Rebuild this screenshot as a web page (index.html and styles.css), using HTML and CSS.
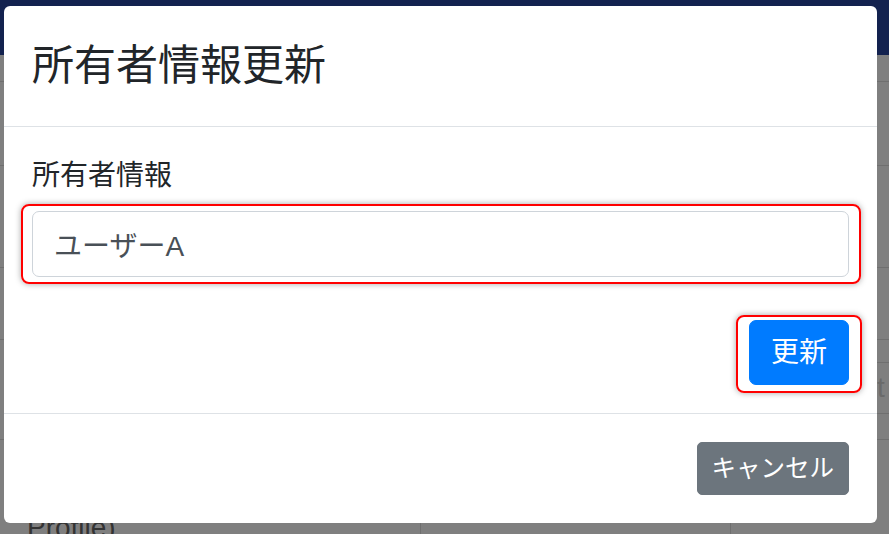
FILE: index.html
```html
<!DOCTYPE html>
<html lang="ja">
<head>
<meta charset="UTF-8">
<title>所有者情報更新</title>
<link rel="stylesheet" href="styles.css">
</head>
<body>

<div class="page">
  <div class="navbar"></div>
  <div class="bg-row h27"><div></div><div></div><div></div></div>
  <div class="bg-row h84"><div></div><div></div><div></div></div>
  <div class="bg-row h102"><div></div><div></div><div></div></div>
  <div class="bg-row h72"><div></div><div></div><div></div></div>
  <div class="bg-row h100">
    <div></div><div></div>
    <div class="sub">
      <div class="sub-a"></div>
      <div class="sub-b"><span class="ghost">t</span></div>
    </div>
  </div>
  <div class="bg-row last">
    <div class="cell-text">Profile)</div><div></div><div></div>
  </div>
</div>

<div class="modal">
  <div class="modal-header">
    <h4 class="modal-title">所有者情報更新</h4>
  </div>
  <div class="modal-body">
    <div class="form-group">
      <label class="label">所有者情報</label>
      <div class="mark mark-input">
        <input class="form-control" type="text" value="ユーザーA">
      </div>
    </div>
    <div class="actions">
      <div class="mark mark-btn">
        <button class="btn btn-primary">更新</button>
      </div>
    </div>
  </div>
  <div class="modal-footer">
    <button class="btn btn-sm btn-secondary">キャンセル</button>
  </div>
</div>

</body>
</html>
```

FILE: styles.css
```css
html, body { margin: 0; height: 100%; overflow: hidden; }
body {
  font-family: "Liberation Sans", "Noto Sans CJK JP", sans-serif;
  background-color: #7f7f7f;
  color: #212529;
}

/* dimmed page behind the dialog */
.page { width: 889px; }
.navbar { height: 55px; background-color: #13224f; }
.bg-row {
  display: grid;
  grid-template-columns: 420px 310px 1fr;
  border-bottom: 1px solid #6f6f6f;
  box-sizing: border-box;
}
.bg-row > div + div { border-left: 1px solid #6f6f6f; }
.h27 { height: 27px; }
.h84 { height: 84px; }
.h102 { height: 102px; }
.h72 { height: 72px; }
.h100 { height: 100px; }
.last { height: 100px; border-bottom: none; }
.sub-a { height: 22px; border-bottom: 1px solid #6f6f6f; }
.sub-b { height: 50px; border-bottom: 1px solid #6f6f6f; padding-left: 146px; }
.ghost { font-size: 28px; line-height: 50px; color: #6a6a6a; }
.cell-text {
  padding: 68px 0 0 27px;
  font-size: 28px;
  line-height: 40px;
  color: #333333;
  white-space: nowrap;
}

/* dialog */
.modal {
  position: absolute;
  left: 4px;
  top: 6px;
  width: 873px;
  background-color: #fff;
  border-radius: 6px;
  box-sizing: border-box;
}
.modal-header {
  padding: 28px;
  border-bottom: 1px solid #dee2e6;
}
.modal-title {
  margin: 0;
  font-size: 42px;
  line-height: 64px;
  font-weight: 400;
  color: #212529;
}
.modal-body { padding: 28px; }
.form-group { margin-bottom: 43px; }
.label {
  display: block;
  margin-bottom: 14px;
  font-size: 28px;
  line-height: 42px;
}
.form-control {
  display: block;
  width: 100%;
  height: 66px;
  box-sizing: border-box;
  padding: 0 21px;
  font-family: inherit;
  font-size: 28px;
  color: #495057;
  border: 1px solid #ced4da;
  border-radius: 7px;
  background: #fff;
}

/* red annotation boxes */
.mark { position: relative; }
.mark::after {
  content: "";
  position: absolute;
  border: 2px solid #ff0000;
  border-radius: 8px;
  box-shadow: 0 0 6px rgba(0, 0, 0, 0.35);
  pointer-events: none;
}
.mark-input::after { left: -11px; right: -12px; top: -7px; bottom: -7px; }
.mark-btn::after { left: -13px; right: -13px; top: -5px; bottom: -8px; }
.mark-input .form-control { position: relative; z-index: 1; }

.actions { display: flex; justify-content: flex-end; }
.btn {
  display: block;
  font-family: inherit;
  color: #fff;
  border: 1px solid transparent;
  box-sizing: border-box;
}
.btn-primary {
  position: relative;
  z-index: 1;
  height: 65px;
  padding: 0 21px;
  font-size: 28px;
  line-height: 42px;
  background-color: #007bff;
  border-color: #007bff;
  border-radius: 7px;
}
.modal-footer {
  display: flex;
  justify-content: flex-end;
  padding: 21px;
  border-top: 1px solid #dee2e6;
}
.btn-sm {
  margin: 7px;
  height: 53px;
  padding: 0 14px;
  font-size: 24.5px;
  line-height: 36px;
  border-radius: 5px;
}
.btn-secondary { background-color: #6c757d; border-color: #6c757d; }
```
